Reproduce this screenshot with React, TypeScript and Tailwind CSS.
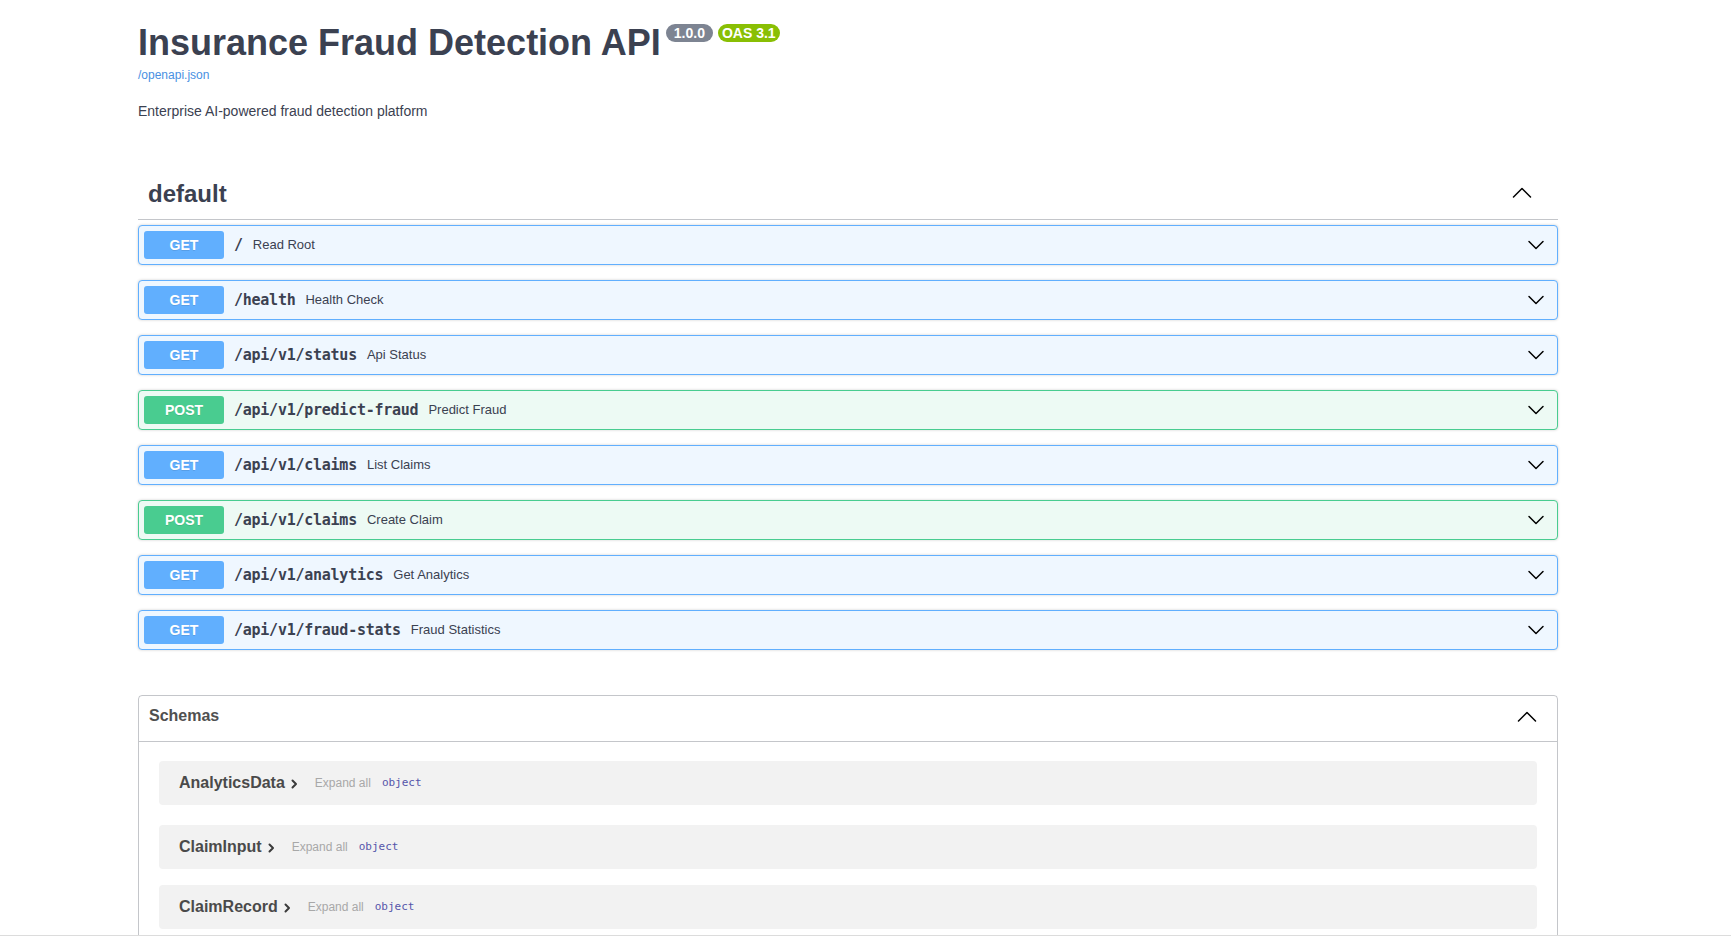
import React from 'react'

type Op = {
  method: 'GET' | 'POST'
  path: string
  summary: string
}

const ops: Op[] = [
  { method: 'GET', path: '/', summary: 'Read Root' },
  { method: 'GET', path: '/health', summary: 'Health Check' },
  { method: 'GET', path: '/api/v1/status', summary: 'Api Status' },
  { method: 'POST', path: '/api/v1/predict-fraud', summary: 'Predict Fraud' },
  { method: 'GET', path: '/api/v1/claims', summary: 'List Claims' },
  { method: 'POST', path: '/api/v1/claims', summary: 'Create Claim' },
  { method: 'GET', path: '/api/v1/analytics', summary: 'Get Analytics' },
  { method: 'GET', path: '/api/v1/fraud-stats', summary: 'Fraud Statistics' },
]

const schemas = [
  { name: 'AnalyticsData', gap: 'mb-[20px]' },
  { name: 'ClaimInput', gap: 'mb-[16px]' },
  { name: 'ClaimRecord', gap: '' },
]

const sans = { fontFamily: '"Liberation Sans", Arial, sans-serif' }
const mono = { fontFamily: '"DejaVu Sans Mono", "Liberation Mono", monospace' }

function ChevronDown() {
  return (
    <svg width="18" height="18" viewBox="0 0 18 18" fill="none">
      <polyline points="2,5.5 9,12.5 16,5.5" stroke="#000" strokeWidth="1.5" strokeLinecap="round" strokeLinejoin="round" />
    </svg>
  )
}

function ChevronUp() {
  return (
    <svg width="20" height="20" viewBox="0 0 20 20" fill="none">
      <polyline points="1.5,14 10,5.5 18.5,14" stroke="#000" strokeWidth="1.5" strokeLinecap="round" strokeLinejoin="round" />
    </svg>
  )
}

function SmallChevron() {
  return (
    <svg width="7" height="10" viewBox="0 0 7 10" fill="none">
      <polyline points="1.5,1.5 5,5 1.5,8.5" stroke="#3b3b3b" strokeWidth="2" strokeLinecap="round" strokeLinejoin="round" />
    </svg>
  )
}

function OpBlock({ op }: { op: Op }) {
  const isGet = op.method === 'GET'
  return (
    <div
      className={`flex h-[40px] items-center rounded-[4px] border p-[5px] shadow-[0_0_3px_rgba(0,0,0,0.19)] ${
        isGet ? 'border-[#61affe] bg-[#eff7ff]' : 'border-[#49cc90] bg-[#edfaf4]'
      }`}
    >
      <span
        className={`flex h-[28px] w-[80px] items-center justify-center rounded-[3px] text-[14px] font-bold text-white [text-shadow:0_1px_0_rgba(0,0,0,0.1)] ${
          isGet ? 'bg-[#61affe]' : 'bg-[#49cc90]'
        }`}
        style={sans}
      >
        {op.method}
      </span>
      <span className="px-[10px] text-[15px] font-bold tracking-[-0.25px] text-[#3b4151]" style={mono}>
        {op.path}
      </span>
      <span className="text-[13px] text-[#3b4151]" style={sans}>
        {op.summary}
      </span>
      <span className="ml-auto mr-[7px] flex items-center">
        <ChevronDown />
      </span>
    </div>
  )
}

export default function App() {
  return (
    <div className="min-h-screen bg-white text-[#3b4151]" style={sans}>
      <div className="ml-[138px] w-[1420px] pb-10">
        {/* info */}
        <div className="pt-[22px]">
          <div className="flex items-start">
            <h2 className="text-[36px] font-bold leading-[41px] text-[#3b4151]">Insurance Fraud Detection API</h2>
            <span className="ml-[5px] mt-[2px] rounded-full bg-[#7d8492] px-[8px] text-[14px] font-bold leading-[18px] text-white">
              1.0.0
            </span>
            <span className="ml-[5px] mt-[2px] rounded-full bg-[#89bf04] px-[4px] text-[14px] font-bold leading-[18px] text-white">
              OAS 3.1
            </span>
          </div>
          <a className="mt-[5px] block text-[12px] leading-[14px] text-[#4990e2]">/openapi.json</a>
          <p className="mt-[21px] text-[14px] leading-[16px] text-[#3b4151]">Enterprise AI-powered fraud detection platform</p>
        </div>

        {/* default tag */}
        <div className="mt-[52px] flex items-start border-b border-[rgba(59,65,81,0.3)] pb-[12px] pl-[10px] pr-[26px] pt-[9px]">
          <h3 className="text-[24px] font-bold leading-[27px] text-[#3b4151]">default</h3>
          <span className="ml-auto mt-[3px] flex">
            <ChevronUp />
          </span>
        </div>

        <div className="mt-[5px] flex flex-col gap-[15px]">
          {ops.map((op, i) => (
            <OpBlock key={i} op={op} />
          ))}
        </div>

        {/* schemas */}
        <section className="mt-[45px] rounded-[4px] border border-[rgba(59,65,81,0.3)]">
          <div className="flex h-[46px] items-start border-b border-[rgba(59,65,81,0.3)] pl-[10px] pr-[20px] pt-[11px]">
            <h4 className="text-[16px] font-bold leading-[18px] text-[#505050]">Schemas</h4>
            <span className="ml-auto mt-[0px] flex">
              <ChevronUp />
            </span>
          </div>
          <div className="px-[20px] pt-[19px] pb-[20px]">
            {schemas.map((s) => (
              <div key={s.name} className={`flex h-[44px] items-center rounded-[4px] bg-[#f2f2f2] pl-[20px] ${s.gap}`}>
                <span className="text-[16px] font-bold text-[#4a4a4a]">{s.name}</span>
                <span className="ml-[6px] mt-[2px] flex">
                  <SmallChevron />
                </span>
                <span className="ml-[17px] text-[12px] text-[#a8a8a8]">Expand all</span>
                <span className="ml-[11px] text-[11px] text-[#55a]" style={mono}>
                  object
                </span>
              </div>
            ))}
          </div>
        </section>
      </div>
      <div className="fixed bottom-0 left-0 right-0 h-[4px] border-t border-[#dcdcdc] bg-white" />
    </div>
  )
}
